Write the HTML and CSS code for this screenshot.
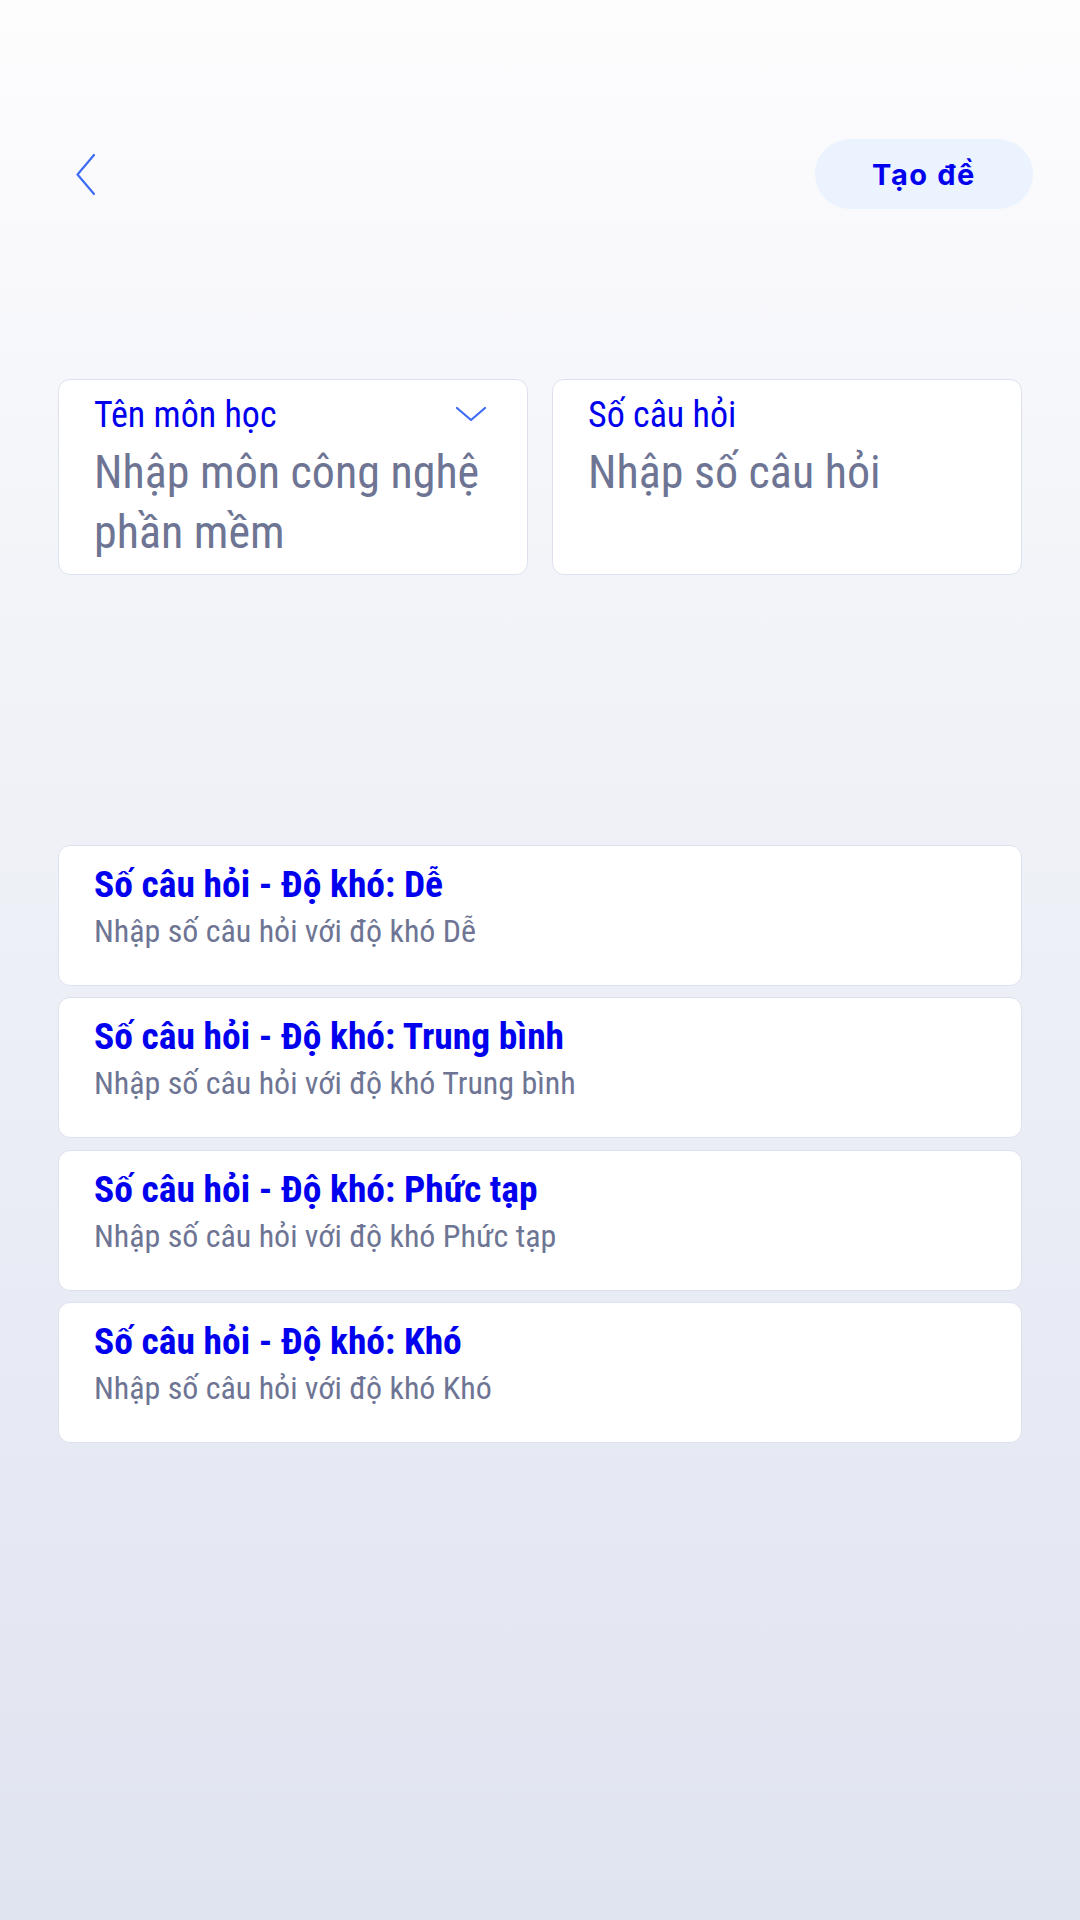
FILE: index.html
```html
<!DOCTYPE html>
<html lang="vi">
<head>
<meta charset="utf-8">
<title>Tạo đề</title>
<link rel="stylesheet" href="styles.css">
</head>
<body>
<div class="screen">
  <header class="topbar">
    <button class="back" aria-label="Quay lại">
      <svg width="24" height="46" viewBox="0 0 24 46"><path d="M20 3 L3.5 22.5 L20 42" fill="none" stroke="#3d6cf4" stroke-width="2.2" stroke-linejoin="round" stroke-linecap="round"/></svg>
    </button>
    <button class="create">Tạo đề</button>
  </header>

  <section class="fields">
    <div class="field">
      <div class="field-head">
        <span class="field-label">Tên môn học</span>
        <svg class="caret" width="32" height="16" viewBox="0 0 32 16"><path d="M2 2 L16 14 L30 2" fill="none" stroke="#3d6cf4" stroke-width="2.2" stroke-linejoin="round" stroke-linecap="round"/></svg>
      </div>
      <div class="field-value">Nhập môn công nghệ phần mềm</div>
    </div>
    <div class="field">
      <div class="field-head">
        <span class="field-label">Số câu hỏi</span>
      </div>
      <div class="field-value">Nhập số câu hỏi</div>
    </div>
  </section>

  <section class="levels">
    <div class="level">
      <div class="level-title">Số câu hỏi - Độ khó: Dễ</div>
      <div class="level-hint">Nhập số câu hỏi với độ khó Dễ</div>
    </div>
    <div class="level">
      <div class="level-title">Số câu hỏi - Độ khó: Trung bình</div>
      <div class="level-hint">Nhập số câu hỏi với độ khó Trung bình</div>
    </div>
    <div class="level">
      <div class="level-title">Số câu hỏi - Độ khó: Phức tạp</div>
      <div class="level-hint">Nhập số câu hỏi với độ khó Phức tạp</div>
    </div>
    <div class="level">
      <div class="level-title">Số câu hỏi - Độ khó: Khó</div>
      <div class="level-hint">Nhập số câu hỏi với độ khó Khó</div>
    </div>
  </section>
</div>
</body>
</html>
```

FILE: styles.css
```css
* { box-sizing: border-box; }

html, body {
  margin: 0;
  padding: 0;
}

body {
  width: 1080px;
  height: 1920px;
  overflow: hidden;
  font-family: "Roboto Condensed", "Roboto", "Noto Sans", sans-serif;
  font-stretch: condensed;
}

.screen {
  width: 1080px;
  height: 1920px;
  background: linear-gradient(180deg, #fdfdfe 0%, #f3f4f9 30%, #e9ecf5 65%, #e0e4f0 100%);
  display: flex;
  flex-direction: column;
}

.topbar {
  display: flex;
  align-items: center;
  justify-content: space-between;
  padding: 139px 47px 0 74px;
}

.back {
  border: 0;
  background: none;
  padding: 0;
  margin: 2px 0 0 0;
  width: 24px;
  height: 46px;
  display: flex;
}

.create {
  width: 218px;
  height: 70px;
  border: 0;
  border-radius: 35px;
  background: #eaf3fe;
  color: #0000ee;
  font-family: "Inter", "Open Sans", sans-serif;
  font-weight: 700;
  font-size: 29px;
  letter-spacing: 1.6px;
  padding: 0;
}

.fields {
  display: grid;
  grid-template-columns: 1fr 1fr;
  gap: 24px;
  margin: 170px 58px 0 58px;
}

.field {
  height: 196px;
  background: #ffffff;
  border: 1px solid #dde1ef;
  border-radius: 12px;
  padding: 14px 42px 0 35px;
}

.field-head {
  display: flex;
  align-items: flex-start;
  justify-content: space-between;
}

.field-label {
  font-size: 36px;
  line-height: 42px;
  color: #0000ee;
}

.caret {
  margin-top: 12px;
  margin-right: -2px;
}

.field-value {
  margin-top: 6px;
  font-size: 46px;
  line-height: 60px;
  color: #6e7594;
}

.levels {
  display: flex;
  flex-direction: column;
  gap: 11.4px;
  margin: 270px 58px 0 58px;
}

.level {
  height: 141px;
  background: #ffffff;
  border: 1px solid #dde1ef;
  border-radius: 12px;
  padding: 15px 30px 0 35px;
}

.level-title {
  font-size: 37.5px;
  line-height: 46px;
  font-weight: 700;
  color: #0000ee;
}

.level-hint {
  margin-top: 4px;
  font-size: 32px;
  line-height: 40px;
  color: #6e7594;
}
```
